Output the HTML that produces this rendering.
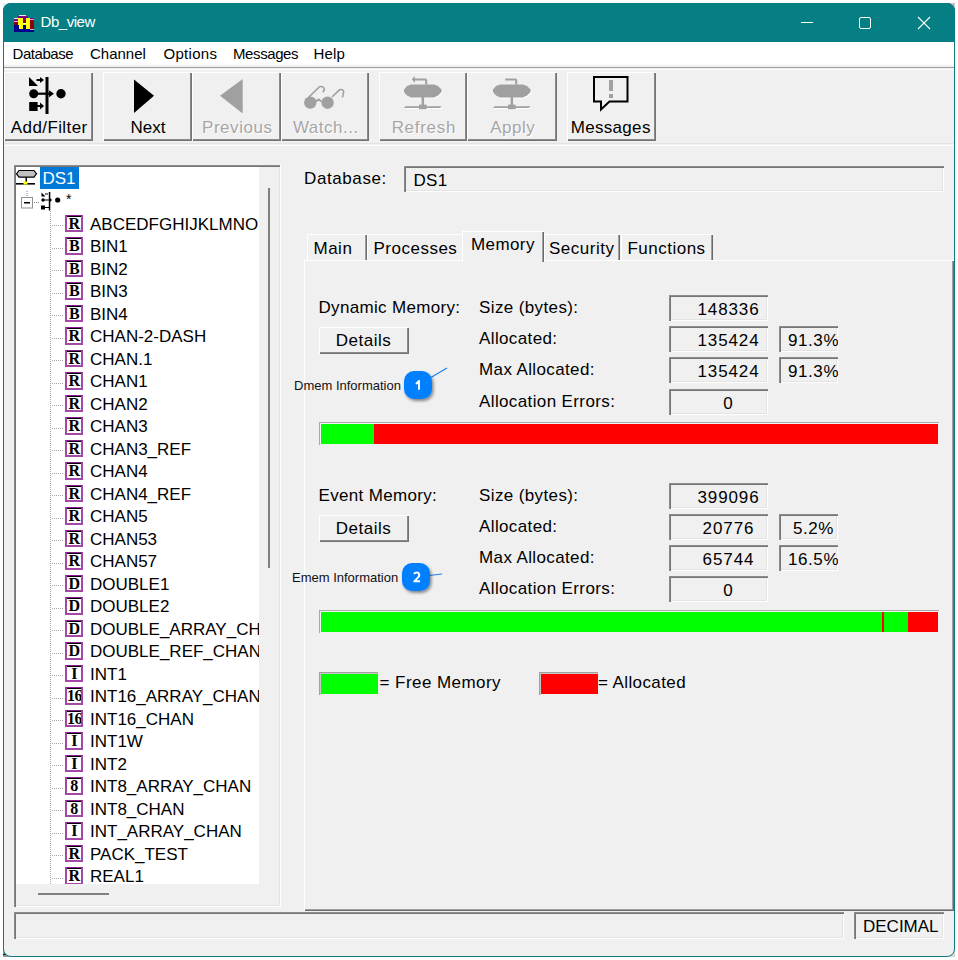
<!DOCTYPE html><html><head><meta charset="utf-8"><style>
*{box-sizing:border-box;margin:0;padding:0}
html,body{width:958px;height:960px;background:#fff;overflow:hidden;font-family:"Liberation Sans",sans-serif;color:#000}
.a{position:absolute}
.t{position:absolute;white-space:pre;line-height:1}
.btn{position:absolute;background:#f0f0f0;border-top:1px solid #fff;border-left:1px solid #fff;box-shadow:inset -1px -1px 0 #747474,inset -2px -2px 0 #8a8a8a}
.bl{position:absolute;font-size:17px;line-height:1;white-space:pre;text-align:center;left:0;right:0}
.dis{color:#a6a6a6;text-shadow:1px 1px 0 #fff}
.sunk{position:absolute;background:#f0f0f0;box-shadow:inset 1px 1px 0 #8c8c8c,inset 2px 2px 0 #767676,inset -1px -1px 0 #fff,inset -2px -2px 0 #e3e3e3}
.val{position:absolute;font-size:17px;line-height:1;white-space:pre}
.ico{position:absolute;width:18px;height:17.5px;border:2px solid #a348a8;border-top:1px solid #8c1f94;box-shadow:inset 0 1px 0 #000;background:#fff;font-family:"Liberation Serif",serif;font-weight:bold;font-size:16px;line-height:15px;text-align:center;color:#000;overflow:hidden;letter-spacing:-0.5px}
.row{position:absolute;left:90px;font-size:17px;line-height:1;white-space:pre}
</style></head><body>
<div class="a" style="left:3px;top:3px;width:7px;height:7px;background:#ececec"></div>
<div class="a" style="left:948px;top:3px;width:7px;height:7px;background:linear-gradient(90deg,#555 0 2px,#c4c4c4 2px)"></div>
<div class="a" style="left:3px;top:950px;width:7px;height:7px;background:linear-gradient(#999 0 4px,#111 4px 5px,#999 5px)"></div>
<div class="a" style="left:949px;top:950px;width:6px;height:7px;background:#d4d4d4"></div>
<div class="a" style="left:3px;top:3px;width:952px;height:954px;background:#f0f0f0;border:1px solid #0b7e83;border-radius:8px;overflow:hidden">
</div>
<div class="a" style="left:3px;top:3px;width:952px;height:39px;background:#067f84;border-radius:8px 8px 0 0"></div>
<svg class="a" style="left:14px;top:15px" width="20" height="17" viewBox="14 15 20 17" shape-rendering="crispEdges">
<rect x="14" y="25" width="20" height="7" fill="#00008b"/>
<rect x="14" y="21" width="6" height="4" fill="#8b0000"/>
<rect x="14" y="18" width="6" height="3" fill="#800080"/>
<rect x="14" y="18" width="4" height="1" fill="#e8f0f0"/>
<rect x="14" y="21" width="5" height="1" fill="#f0b0e0"/>
<rect x="18" y="16" width="10" height="3" fill="#800080"/>
<rect x="19" y="15" width="7" height="1" fill="#f8e8f0"/>
<rect x="30" y="18" width="4" height="2" fill="#800080"/>
<rect x="30" y="19" width="4" height="1" fill="#f0a0d0"/>
<rect x="30" y="20" width="4" height="9" fill="#8b0000"/>
<rect x="30" y="29" width="4" height="1" fill="#c0c0e0"/>
<rect x="23" y="18" width="3" height="3" fill="#800080"/>
<rect x="23" y="21" width="3" height="2" fill="#8b0000"/>
<rect x="23" y="23" width="3" height="1" fill="#fff"/>
<rect x="23" y="24" width="3" height="1" fill="#60c040"/>
<rect x="23" y="25" width="3" height="5" fill="#00008b"/>
<path d="M18 18 h5 v6 h3 v-6 h4 v3 l-0.5 8 h-3.5 v-4 h-3 v4 h-4 l-1 -8 z" fill="#ffff00"/>
<rect x="19" y="19" width="1" height="8" fill="#ffffc0"/>
<rect x="27" y="19" width="1" height="8" fill="#ffffc0"/>
</svg>
<div class="t" style="left:40.5px;top:14px;font-size:15px;color:#fff;letter-spacing:-0.45px">Db_view</div>
<div class="a" style="left:801px;top:22px;width:12px;height:1px;background:#fff"></div>
<div class="a" style="left:859px;top:17px;width:12px;height:12px;border:1px solid #fff;border-radius:2px"></div>
<svg class="a" style="left:917px;top:16px" width="14" height="14" viewBox="0 0 14 14"><path d="M1 1 L13 13 M13 1 L1 13" stroke="#fff" stroke-width="1.1"/></svg>
<div class="a" style="left:4px;top:42px;width:950px;height:22px;background:#fff"></div>
<div class="a" style="left:4px;top:64px;width:950px;height:3px;background:linear-gradient(#fbfbfb,#ececec)"></div>
<div class="a" style="left:4px;top:67px;width:950px;height:1px;background:#a0a0a0"></div>
<div class="a" style="left:4px;top:69px;width:950px;height:1px;background:#fafafa"></div>
<div class="t" style="left:12.5px;top:46px;font-size:15px;letter-spacing:-0.45px">Database</div>
<div class="t" style="left:90px;top:46px;font-size:15px;letter-spacing:0px">Channel</div>
<div class="t" style="left:163.5px;top:46px;font-size:15px;letter-spacing:0.3px">Options</div>
<div class="t" style="left:233px;top:46px;font-size:15px;letter-spacing:-0.4px">Messages</div>
<div class="t" style="left:313.5px;top:46px;font-size:15px;letter-spacing:0.2px">Help</div>
<div class="btn" style="left:4px;top:72px;width:89px;height:69px"><div class="bl" style="top:46px;letter-spacing:0.4px;text-indent:0.4px;">Add/Filter</div></div>
<div class="btn" style="left:103px;top:72px;width:89px;height:69px"><div class="bl" style="top:46px;letter-spacing:0px;text-indent:0px;">Next</div></div>
<div class="btn" style="left:192px;top:72px;width:89px;height:69px"><div class="bl dis" style="top:46px;letter-spacing:0.55px;text-indent:0.55px;">Previous</div></div>
<div class="btn" style="left:281px;top:72px;width:88px;height:69px"><div class="bl dis" style="top:46px;letter-spacing:0.5px;text-indent:0.5px;">Watch...</div></div>
<div class="btn" style="left:379px;top:72px;width:88px;height:69px"><div class="bl dis" style="top:46px;letter-spacing:0.7px;text-indent:0.7px;">Refresh</div></div>
<div class="btn" style="left:467px;top:72px;width:90px;height:69px"><div class="bl dis" style="top:46px;letter-spacing:0.45px;text-indent:0.45px;">Apply</div></div>
<div class="btn" style="left:567px;top:72px;width:89px;height:69px"><div class="bl" style="top:46px;letter-spacing:0.3px;text-indent:-2.5px;">Messages</div></div>
<svg class="a" style="left:0;top:0" width="700" height="150" viewBox="0 0 700 150">
<g fill="#000">
<path d="M29 77 L29 86 L38 86 Z"/>
<path d="M36.5 80 h5" stroke="#000" stroke-width="2"/><path d="M40 77 L44 80 L40 83 Z"/>
<rect x="45.5" y="77" width="3" height="37"/>
<circle cx="33.7" cy="93.7" r="4.5"/>
<path d="M37 93.7 h12" stroke="#000" stroke-width="2.2"/><path d="M49 90.2 L54 93.7 L49 97.2 Z"/>
<circle cx="61" cy="93.7" r="4.7"/>
<rect x="29.2" y="102" width="8.4" height="9"/>
<path d="M37 106 h4" stroke="#000" stroke-width="2"/><path d="M40 102.5 L44 106 L40 109.5 Z"/>
<path d="M134 79.5 L154 95.7 L134 113 Z"/>
</g>
<g fill="#a0a0a0">
<path d="M242.7 79 L220 95.8 L242.7 113.6 Z"/>
<circle cx="310.3" cy="102.6" r="6.2"/><circle cx="327.6" cy="102.7" r="6.2"/>
<path d="M316 101.5 L318.5 99.5 L321.5 101.5" stroke="#a0a0a0" stroke-width="2" fill="none"/>
<path d="M308.5 97.5 L319.5 86.8 Q322.5 85.8 324 88 Q325 90 322.8 92.2" stroke="#a0a0a0" stroke-width="1.6" fill="none"/>
<path d="M332 97 L339.6 89.8 Q342.5 88.8 343.7 91.3 L342.5 97.3" stroke="#a0a0a0" stroke-width="1.6" fill="none"/>
</g>
<defs><g id="disk"><path d="M411 84.5 L434 84.5 L438 86 L441.6 89.5 L441.6 92 L438 95.5 L434 97.6 L411 97.6 L407 95.5 L404 92 L404 89.5 L407 86 Z"/>
<rect x="421.6" y="97" width="2.6" height="9"/>
<path d="M405.5 106.2 L441.6 106.2 L440 108 L404 108 Z"/>
<rect x="419" y="104.6" width="7.7" height="4.7"/></g></defs>
<g fill="#fff" transform="translate(1,1)"><use href="#disk"/><use href="#disk" transform="translate(89,0)"/></g>
<g fill="#a0a0a0"><use href="#disk"/><use href="#disk" transform="translate(89,0)"/>
<path d="M413 79.5 h12.2 q1 0 1 1 v4" stroke="#a0a0a0" stroke-width="2.1" fill="none"/>
<path d="M411.8 79.3 L414.8 75.9 L414.8 83 Z"/>
<path d="M505.3 79.5 h9.9 q1 0 1 1 v4" stroke="#a0a0a0" stroke-width="2.1" fill="none"/>
</g>
<path d="M594 77 h33.5 v24.5 h-18 l-8.5 8 v-8 h-7 z" stroke="#000" stroke-width="2" fill="none"/>
<rect x="609" y="80" width="4" height="11" fill="#a0a0a0"/>
<rect x="609" y="94" width="4" height="4" fill="#a0a0a0"/>
</svg>
<div class="a" style="left:4px;top:143px;width:950px;height:1px;background:#e3e3e3"></div>
<div class="a" style="left:4px;top:145px;width:950px;height:1px;background:#fff"></div>
<div class="a" style="left:14px;top:165px;width:267px;height:742px;background:#f0f0f0;box-shadow:inset 1px 1px 0 #8c8c8c,inset 2px 2px 0 #767676,inset -1px -1px 0 #fff,inset -2px -2px 0 #e3e3e3"></div>
<div class="a" style="left:16px;top:167px;width:243px;height:717px;background:#fff;overflow:hidden">
</div>
<div class="a" style="left:268px;top:188px;width:2px;height:380px;background:#808080"></div>
<div class="a" style="left:38px;top:893px;width:71px;height:2px;background:#808080"></div>
<svg class="a" style="left:16px;top:166px" width="60" height="50" viewBox="16 166 60 50">
<path d="M19 170.5 h15 l2.5 3.3 l-2.5 3.4 h-15 l-2.5 -3.4 z" fill="#c0c0c0" stroke="#000" stroke-width="1.2"/>
<rect x="25.5" y="177" width="1.5" height="6" fill="#000"/>
<rect x="16" y="183" width="19" height="1.6" fill="#000"/>
<rect x="23.5" y="181.5" width="4" height="3" fill="#ffff00"/>
<path d="M27 191 v5" stroke="#808080" stroke-width="1" stroke-dasharray="1 1"/>
<rect x="21.5" y="197.5" width="11" height="10.5" fill="#fff" stroke="#919191" stroke-width="1"/>
<rect x="24" y="202" width="6" height="1.5" fill="#000"/>
<path d="M34 202.5 h6" stroke="#808080" stroke-width="1" stroke-dasharray="1 1"/>
<g fill="#000">
<path d="M41.5 192.5 v4 h4 z"/>
<path d="M45 194 h3" stroke="#000" stroke-width="1"/>
<rect x="48.8" y="192" width="1.5" height="18.5"/>
<circle cx="43" cy="200" r="1.7"/>
<path d="M43 200 h6" stroke="#000" stroke-width="1"/>
<path d="M50 198 L52 200 L50 202 Z"/>
<circle cx="57.7" cy="200" r="2.6"/>
<rect x="41" y="205.5" width="4" height="4"/>
<path d="M45 207.5 h4" stroke="#000" stroke-width="1"/>
</g>
</svg>
<div class="a" style="left:40px;top:167px;width:39px;height:22px;background:#0078d7"></div>
<div class="t" style="left:42.5px;top:170px;font-size:17px;color:#fff">DS1</div>
<div class="t" style="left:66px;top:192px;font-size:14px">*</div>
<div class="a" style="left:50px;top:211px;width:1px;height:673px;background:repeating-linear-gradient(#a8a8a8 0 1px,transparent 1px 2px)"></div>
<div class="a" style="left:16px;top:167px;width:243px;height:717px;overflow:hidden">
<div class="a" style="left:36px;top:58.0px;width:12px;height:1px;background:repeating-linear-gradient(90deg,#a8a8a8 0 1px,transparent 1px 2px)"></div>
<div class="ico" style="left:49px;top:47.5px">R</div>
<div class="row" style="left:74px;top:48.5px">ABCEDFGHIJKLMNO</div>
<div class="a" style="left:36px;top:80.5px;width:12px;height:1px;background:repeating-linear-gradient(90deg,#a8a8a8 0 1px,transparent 1px 2px)"></div>
<div class="ico" style="left:49px;top:70.0px">B</div>
<div class="row" style="left:74px;top:71.0px">BIN1</div>
<div class="a" style="left:36px;top:103.0px;width:12px;height:1px;background:repeating-linear-gradient(90deg,#a8a8a8 0 1px,transparent 1px 2px)"></div>
<div class="ico" style="left:49px;top:92.5px">B</div>
<div class="row" style="left:74px;top:93.5px">BIN2</div>
<div class="a" style="left:36px;top:125.5px;width:12px;height:1px;background:repeating-linear-gradient(90deg,#a8a8a8 0 1px,transparent 1px 2px)"></div>
<div class="ico" style="left:49px;top:115.0px">B</div>
<div class="row" style="left:74px;top:116.0px">BIN3</div>
<div class="a" style="left:36px;top:148.0px;width:12px;height:1px;background:repeating-linear-gradient(90deg,#a8a8a8 0 1px,transparent 1px 2px)"></div>
<div class="ico" style="left:49px;top:137.5px">B</div>
<div class="row" style="left:74px;top:138.5px">BIN4</div>
<div class="a" style="left:36px;top:170.5px;width:12px;height:1px;background:repeating-linear-gradient(90deg,#a8a8a8 0 1px,transparent 1px 2px)"></div>
<div class="ico" style="left:49px;top:160.0px">R</div>
<div class="row" style="left:74px;top:161.0px">CHAN-2-DASH</div>
<div class="a" style="left:36px;top:193.0px;width:12px;height:1px;background:repeating-linear-gradient(90deg,#a8a8a8 0 1px,transparent 1px 2px)"></div>
<div class="ico" style="left:49px;top:182.5px">R</div>
<div class="row" style="left:74px;top:183.5px">CHAN.1</div>
<div class="a" style="left:36px;top:215.5px;width:12px;height:1px;background:repeating-linear-gradient(90deg,#a8a8a8 0 1px,transparent 1px 2px)"></div>
<div class="ico" style="left:49px;top:205.0px">R</div>
<div class="row" style="left:74px;top:206.0px">CHAN1</div>
<div class="a" style="left:36px;top:238.0px;width:12px;height:1px;background:repeating-linear-gradient(90deg,#a8a8a8 0 1px,transparent 1px 2px)"></div>
<div class="ico" style="left:49px;top:227.5px">R</div>
<div class="row" style="left:74px;top:228.5px">CHAN2</div>
<div class="a" style="left:36px;top:260.5px;width:12px;height:1px;background:repeating-linear-gradient(90deg,#a8a8a8 0 1px,transparent 1px 2px)"></div>
<div class="ico" style="left:49px;top:250.0px">R</div>
<div class="row" style="left:74px;top:251.0px">CHAN3</div>
<div class="a" style="left:36px;top:283.0px;width:12px;height:1px;background:repeating-linear-gradient(90deg,#a8a8a8 0 1px,transparent 1px 2px)"></div>
<div class="ico" style="left:49px;top:272.5px">R</div>
<div class="row" style="left:74px;top:273.5px">CHAN3_REF</div>
<div class="a" style="left:36px;top:305.5px;width:12px;height:1px;background:repeating-linear-gradient(90deg,#a8a8a8 0 1px,transparent 1px 2px)"></div>
<div class="ico" style="left:49px;top:295.0px">R</div>
<div class="row" style="left:74px;top:296.0px">CHAN4</div>
<div class="a" style="left:36px;top:328.0px;width:12px;height:1px;background:repeating-linear-gradient(90deg,#a8a8a8 0 1px,transparent 1px 2px)"></div>
<div class="ico" style="left:49px;top:317.5px">R</div>
<div class="row" style="left:74px;top:318.5px">CHAN4_REF</div>
<div class="a" style="left:36px;top:350.5px;width:12px;height:1px;background:repeating-linear-gradient(90deg,#a8a8a8 0 1px,transparent 1px 2px)"></div>
<div class="ico" style="left:49px;top:340.0px">R</div>
<div class="row" style="left:74px;top:341.0px">CHAN5</div>
<div class="a" style="left:36px;top:373.0px;width:12px;height:1px;background:repeating-linear-gradient(90deg,#a8a8a8 0 1px,transparent 1px 2px)"></div>
<div class="ico" style="left:49px;top:362.5px">R</div>
<div class="row" style="left:74px;top:363.5px">CHAN53</div>
<div class="a" style="left:36px;top:395.5px;width:12px;height:1px;background:repeating-linear-gradient(90deg,#a8a8a8 0 1px,transparent 1px 2px)"></div>
<div class="ico" style="left:49px;top:385.0px">R</div>
<div class="row" style="left:74px;top:386.0px">CHAN57</div>
<div class="a" style="left:36px;top:418.0px;width:12px;height:1px;background:repeating-linear-gradient(90deg,#a8a8a8 0 1px,transparent 1px 2px)"></div>
<div class="ico" style="left:49px;top:407.5px">D</div>
<div class="row" style="left:74px;top:408.5px">DOUBLE1</div>
<div class="a" style="left:36px;top:440.5px;width:12px;height:1px;background:repeating-linear-gradient(90deg,#a8a8a8 0 1px,transparent 1px 2px)"></div>
<div class="ico" style="left:49px;top:430.0px">D</div>
<div class="row" style="left:74px;top:431.0px">DOUBLE2</div>
<div class="a" style="left:36px;top:463.0px;width:12px;height:1px;background:repeating-linear-gradient(90deg,#a8a8a8 0 1px,transparent 1px 2px)"></div>
<div class="ico" style="left:49px;top:452.5px">D</div>
<div class="row" style="left:74px;top:453.5px">DOUBLE_ARRAY_CHAN</div>
<div class="a" style="left:36px;top:485.5px;width:12px;height:1px;background:repeating-linear-gradient(90deg,#a8a8a8 0 1px,transparent 1px 2px)"></div>
<div class="ico" style="left:49px;top:475.0px">D</div>
<div class="row" style="left:74px;top:476.0px">DOUBLE_REF_CHAN</div>
<div class="a" style="left:36px;top:508.0px;width:12px;height:1px;background:repeating-linear-gradient(90deg,#a8a8a8 0 1px,transparent 1px 2px)"></div>
<div class="ico" style="left:49px;top:497.5px">I</div>
<div class="row" style="left:74px;top:498.5px">INT1</div>
<div class="a" style="left:36px;top:530.5px;width:12px;height:1px;background:repeating-linear-gradient(90deg,#a8a8a8 0 1px,transparent 1px 2px)"></div>
<div class="ico" style="left:49px;top:520.0px">16</div>
<div class="row" style="left:74px;top:521.0px">INT16_ARRAY_CHAN</div>
<div class="a" style="left:36px;top:553.0px;width:12px;height:1px;background:repeating-linear-gradient(90deg,#a8a8a8 0 1px,transparent 1px 2px)"></div>
<div class="ico" style="left:49px;top:542.5px">16</div>
<div class="row" style="left:74px;top:543.5px">INT16_CHAN</div>
<div class="a" style="left:36px;top:575.5px;width:12px;height:1px;background:repeating-linear-gradient(90deg,#a8a8a8 0 1px,transparent 1px 2px)"></div>
<div class="ico" style="left:49px;top:565.0px">I</div>
<div class="row" style="left:74px;top:566.0px">INT1W</div>
<div class="a" style="left:36px;top:598.0px;width:12px;height:1px;background:repeating-linear-gradient(90deg,#a8a8a8 0 1px,transparent 1px 2px)"></div>
<div class="ico" style="left:49px;top:587.5px">I</div>
<div class="row" style="left:74px;top:588.5px">INT2</div>
<div class="a" style="left:36px;top:620.5px;width:12px;height:1px;background:repeating-linear-gradient(90deg,#a8a8a8 0 1px,transparent 1px 2px)"></div>
<div class="ico" style="left:49px;top:610.0px">8</div>
<div class="row" style="left:74px;top:611.0px">INT8_ARRAY_CHAN</div>
<div class="a" style="left:36px;top:643.0px;width:12px;height:1px;background:repeating-linear-gradient(90deg,#a8a8a8 0 1px,transparent 1px 2px)"></div>
<div class="ico" style="left:49px;top:632.5px">8</div>
<div class="row" style="left:74px;top:633.5px">INT8_CHAN</div>
<div class="a" style="left:36px;top:665.5px;width:12px;height:1px;background:repeating-linear-gradient(90deg,#a8a8a8 0 1px,transparent 1px 2px)"></div>
<div class="ico" style="left:49px;top:655.0px">I</div>
<div class="row" style="left:74px;top:656.0px">INT_ARRAY_CHAN</div>
<div class="a" style="left:36px;top:688.0px;width:12px;height:1px;background:repeating-linear-gradient(90deg,#a8a8a8 0 1px,transparent 1px 2px)"></div>
<div class="ico" style="left:49px;top:677.5px">R</div>
<div class="row" style="left:74px;top:678.5px">PACK_TEST</div>
<div class="a" style="left:36px;top:710.5px;width:12px;height:1px;background:repeating-linear-gradient(90deg,#a8a8a8 0 1px,transparent 1px 2px)"></div>
<div class="ico" style="left:49px;top:700.0px">R</div>
<div class="row" style="left:74px;top:701.0px">REAL1</div>
</div>
<div class="a" style="left:259px;top:167px;width:20px;height:738px;background:#f0f0f0"></div>
<div class="a" style="left:268px;top:188px;width:2px;height:380px;background:#808080"></div>
<div class="a" style="left:16px;top:884px;width:263px;height:21px;background:#f0f0f0"></div>
<div class="a" style="left:38px;top:893px;width:71px;height:2px;background:#808080"></div>
<div class="a" style="left:279px;top:167px;width:1px;height:739px;background:#e3e3e3"></div><div class="a" style="left:280px;top:165px;width:1px;height:742px;background:#fff"></div>
<div class="t" style="left:304px;top:170px;font-size:17px;letter-spacing:0.6px">Database:</div>
<div class="sunk" style="left:404px;top:166px;width:540px;height:26px"></div>
<div class="t" style="left:413.5px;top:171.5px;font-size:17px;letter-spacing:0.3px">DS1</div>
<div class="a" style="left:304px;top:260px;width:650px;height:651px;background:#f0f0f0;box-shadow:inset 1px 1px 0 #fff,inset -1px -1px 0 #6a6a6a,inset -2px -2px 0 #a0a0a0"></div>
<div class="a" style="left:307px;top:234px;width:60px;height:26px;box-shadow:inset 1px 1px 0 #fff,inset -1px 0 0 #6a6a6a,inset -2px 0 0 #a0a0a0"><div class="t" style="left:6.5px;top:6px;font-size:17px;letter-spacing:0.5px">Main</div></div>
<div class="a" style="left:367px;top:234px;width:96px;height:26px;box-shadow:inset 1px 1px 0 #fff"><div class="t" style="left:6.5px;top:6px;font-size:17px;letter-spacing:0.5px">Processes</div></div>
<div class="a" style="left:544px;top:234px;width:76px;height:26px;box-shadow:inset 1px 1px 0 #fff,inset -1px 0 0 #6a6a6a,inset -2px 0 0 #a0a0a0"><div class="t" style="left:5px;top:6px;font-size:17px;letter-spacing:0.5px">Security</div></div>
<div class="a" style="left:621px;top:234px;width:92px;height:26px;box-shadow:inset 1px 1px 0 #fff,inset -1px 0 0 #6a6a6a,inset -2px 0 0 #a0a0a0"><div class="t" style="left:6.4px;top:6px;font-size:17px;letter-spacing:0.5px">Functions</div></div>
<div class="a" style="left:462px;top:231px;width:82px;height:31px;background:#f0f0f0;box-shadow:inset 1px 1px 0 #fff,inset -1px 0 0 #6a6a6a,inset -2px 0 0 #a0a0a0"><div class="t" style="left:9px;top:5px;font-size:17px;letter-spacing:0.4px">Memory</div></div>
<div class="t" style="left:318.5px;top:299px;font-size:17px;letter-spacing:0.33px">Dynamic Memory:</div>
<div class="btn" style="left:319px;top:327px;width:90px;height:27px"><div class="bl" style="top:4px;letter-spacing:0.5px;text-indent:-2px">Details</div></div>
<div class="t" style="left:479px;top:299.00px;font-size:17px;letter-spacing:0.38px">Size (bytes):</div>
<div class="t" style="left:479px;top:330.20px;font-size:17px;letter-spacing:0.38px">Allocated:</div>
<div class="t" style="left:479px;top:361.40px;font-size:17px;letter-spacing:0.38px">Max Allocated:</div>
<div class="t" style="left:479px;top:392.60px;font-size:17px;letter-spacing:0.38px">Allocation Errors:</div>
<div class="sunk" style="left:669px;top:295.0px;width:99px;height:26px"><div class="t" style="left:9.5px;width:100px;text-align:center;top:6px;font-size:17px;letter-spacing:0.9px">148336</div></div>
<div class="sunk" style="left:669px;top:326.2px;width:99px;height:26px"><div class="t" style="left:9.5px;width:100px;text-align:center;top:6px;font-size:17px;letter-spacing:0.9px">135424</div></div>
<div class="sunk" style="left:669px;top:357.4px;width:99px;height:26px"><div class="t" style="left:9.5px;width:100px;text-align:center;top:6px;font-size:17px;letter-spacing:0.9px">135424</div></div>
<div class="sunk" style="left:669px;top:388.6px;width:99px;height:26px"><div class="t" style="left:9.5px;width:100px;text-align:center;top:6px;font-size:17px;letter-spacing:0.9px">0</div></div>
<div class="sunk" style="left:779px;top:326.2px;width:59px;height:26px;overflow:hidden"><div class="t" style="left:-15.5px;width:100px;text-align:center;top:6px;font-size:17px;letter-spacing:0.6px">91.3%</div></div>
<div class="sunk" style="left:779px;top:357.4px;width:59px;height:26px;overflow:hidden"><div class="t" style="left:-15.5px;width:100px;text-align:center;top:6px;font-size:17px;letter-spacing:0.6px">91.3%</div></div>
<div class="a" style="left:319px;top:422px;width:620px;height:23px;background:#f0f0f0;box-shadow:inset 1px 1px 0 #a8a8a8,inset 2px 2px 0 #f4f4f4"></div>
<div class="a" style="left:321px;top:424px;width:53px;height:20px;background:#00ff00"></div>
<div class="a" style="left:374px;top:424px;width:564px;height:20px;background:#ff0000"></div>
<div class="t" style="left:318.5px;top:486.5px;font-size:17px;letter-spacing:0.33px">Event Memory:</div>
<div class="btn" style="left:319px;top:514.5px;width:90px;height:27px"><div class="bl" style="top:4px;letter-spacing:0.5px;text-indent:-2px">Details</div></div>
<div class="t" style="left:479px;top:486.50px;font-size:17px;letter-spacing:0.38px">Size (bytes):</div>
<div class="t" style="left:479px;top:517.70px;font-size:17px;letter-spacing:0.38px">Allocated:</div>
<div class="t" style="left:479px;top:548.90px;font-size:17px;letter-spacing:0.38px">Max Allocated:</div>
<div class="t" style="left:479px;top:580.10px;font-size:17px;letter-spacing:0.38px">Allocation Errors:</div>
<div class="sunk" style="left:669px;top:482.5px;width:99px;height:26px"><div class="t" style="left:9.5px;width:100px;text-align:center;top:6px;font-size:17px;letter-spacing:0.9px">399096</div></div>
<div class="sunk" style="left:669px;top:513.7px;width:99px;height:26px"><div class="t" style="left:9.5px;width:100px;text-align:center;top:6px;font-size:17px;letter-spacing:0.9px">20776</div></div>
<div class="sunk" style="left:669px;top:544.9px;width:99px;height:26px"><div class="t" style="left:9.5px;width:100px;text-align:center;top:6px;font-size:17px;letter-spacing:0.9px">65744</div></div>
<div class="sunk" style="left:669px;top:576.1px;width:99px;height:26px"><div class="t" style="left:9.5px;width:100px;text-align:center;top:6px;font-size:17px;letter-spacing:0.9px">0</div></div>
<div class="sunk" style="left:779px;top:513.7px;width:59px;height:26px;overflow:hidden"><div class="t" style="left:-15.5px;width:100px;text-align:center;top:6px;font-size:17px;letter-spacing:0.6px">5.2%</div></div>
<div class="sunk" style="left:779px;top:544.9px;width:59px;height:26px;overflow:hidden"><div class="t" style="left:-15.5px;width:100px;text-align:center;top:6px;font-size:17px;letter-spacing:0.6px">16.5%</div></div>
<div class="a" style="left:319px;top:609.5px;width:620px;height:23px;background:#f0f0f0;box-shadow:inset 1px 1px 0 #a8a8a8,inset 2px 2px 0 #f4f4f4"></div>
<div class="a" style="left:321px;top:611.5px;width:561px;height:20px;background:#00ff00"></div>
<div class="a" style="left:882px;top:611.5px;width:2px;height:20px;background:#ff0000"></div>
<div class="a" style="left:884px;top:611.5px;width:24px;height:20px;background:#00ff00"></div>
<div class="a" style="left:908px;top:611.5px;width:30px;height:20px;background:#ff0000"></div>
<div class="a" style="left:319px;top:672px;width:59px;height:23px;box-shadow:inset 1px 1px 0 #a0a0a0,inset 2px 2px 0 #c8c8c8"></div>
<div class="a" style="left:321px;top:674px;width:57px;height:20px;background:#00ff00"></div>
<div class="t" style="left:379.5px;top:674px;font-size:17px;letter-spacing:0.45px">= Free Memory</div>
<div class="a" style="left:539px;top:672px;width:59px;height:23px;box-shadow:inset 1px 1px 0 #a0a0a0,inset 2px 2px 0 #c8c8c8"></div>
<div class="a" style="left:541px;top:674px;width:57px;height:20px;background:#ff0000"></div>
<div class="t" style="left:598px;top:674px;font-size:17px;letter-spacing:0.4px">= Allocated</div>
<div class="t" style="left:294px;top:379px;font-size:13px;color:#111">Dmem Information</div>
<svg class="a" style="left:394px;top:351px" width="70" height="60" viewBox="394 351 70 60"><defs><filter id="sh1" x="-50%" y="-50%" width="200%" height="200%"><feDropShadow dx="1.5" dy="2" stdDeviation="1.5" flood-color="#000" flood-opacity="0.45"/></filter></defs><path d="M430 378 L447 368" stroke="#1e7ff0" stroke-width="1.2" fill="none"/><rect x="404" y="371" width="28" height="28" rx="10" fill="#0080ff" filter="url(#sh1)"/><path d="M416 384 L419 380.8 L419 389.8" stroke="#fff" stroke-width="1.9" fill="none" stroke-linecap="butt" stroke-linejoin="round"/></svg>
<div class="t" style="left:292px;top:571px;font-size:13px;color:#111">Emem Information</div>
<svg class="a" style="left:392px;top:543px" width="70" height="60" viewBox="392 543 70 60"><defs><filter id="sh2" x="-50%" y="-50%" width="200%" height="200%"><feDropShadow dx="1.5" dy="2" stdDeviation="1.5" flood-color="#000" flood-opacity="0.45"/></filter></defs><path d="M429 575.5 L442 574" stroke="#1e7ff0" stroke-width="1.2" fill="none"/><rect x="402" y="563" width="28" height="28" rx="10" fill="#0080ff" filter="url(#sh2)"/><path d="M413.8 573.8 Q416.3 571.6 418.4 572.9 Q420 574.6 418.6 576.9 L414.2 581.3 L420 581.3" stroke="#fff" stroke-width="1.9" fill="none" stroke-linecap="butt" stroke-linejoin="round"/></svg>
<div class="sunk" style="left:14px;top:912px;width:830px;height:27px"></div>
<div class="sunk" style="left:854px;top:912px;width:90px;height:27px"><div class="t" style="left:9px;top:6px;font-size:17px">DECIMAL</div></div>
</body></html>
